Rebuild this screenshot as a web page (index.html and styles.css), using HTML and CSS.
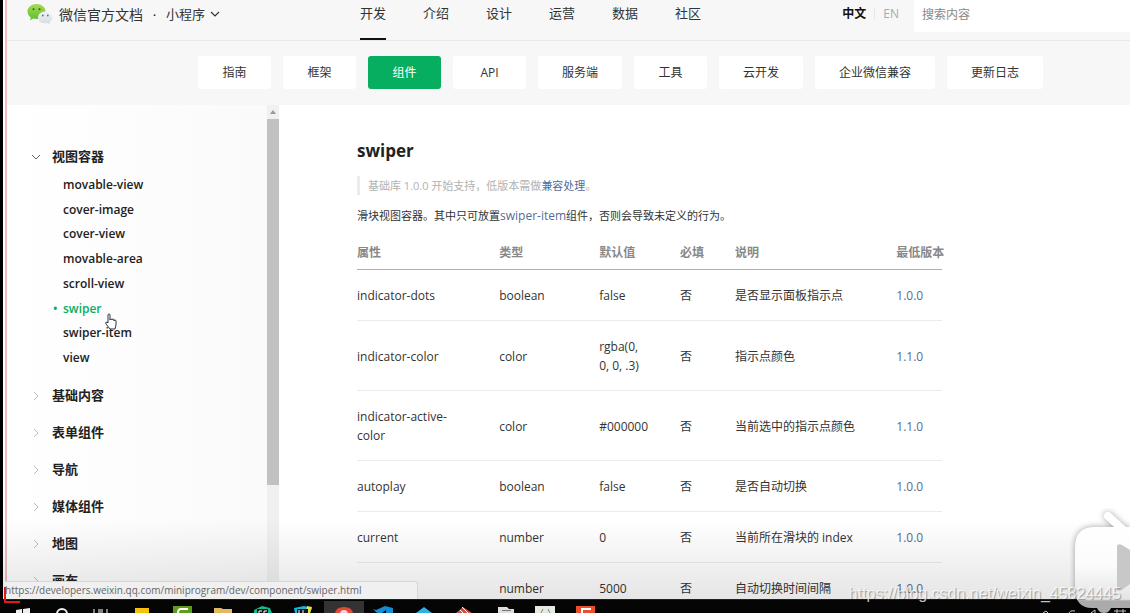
FILE: index.html
```html
<!DOCTYPE html>
<html lang="zh-CN">
<head>
<meta charset="utf-8">
<title>swiper | 微信官方文档</title>
<link rel="stylesheet" href="styles.css">
</head>
<body>
<div class="screen">
  <div class="browser">
    <header class="topbar">
      <a class="brand" href="#">
        <svg class="logo" viewBox="0 0 26 22" width="26" height="22" aria-hidden="true">
          <defs>
            <linearGradient id="g" x1="0" y1="0" x2="0" y2="1"><stop offset="0" stop-color="#a5da52"/><stop offset="1" stop-color="#5fbd35"/></linearGradient>
            <linearGradient id="w" x1="0" y1="0" x2="0" y2="1"><stop offset="0" stop-color="#f0f2f5"/><stop offset="1" stop-color="#d6dae1"/></linearGradient>
          </defs>
          <path fill="url(#g)" d="M9.500 1C4.500 1 .5 4.300.5 8.500c0 2.400 1.300 4.500 3.300 5.900L3 17.300l3.200-1.700c1 .3 2.200.4 3.300.4 5 0 9-3.300 9-7.500S14.500 1 9.500 1z"/>
          <circle cx="6.500" cy="6.200" r="1" fill="#32611e"/><circle cx="12.500" cy="6.200" r="1" fill="#32611e"/>
          <path fill="url(#w)" d="M18.200 8.500c-4 0-7.200 2.600-7.200 5.900s3.200 5.900 7.200 5.900c.8 0 1.600-.1 2.300-.3l2.600 1.300-.6-2.300c1.700-1.100 2.800-2.700 2.800-4.600 0-3.300-3.100-5.900-7.100-5.900z"/>
          <circle cx="15.800" cy="12.500" r=".9" fill="#66717f"/><circle cx="20.800" cy="12.500" r=".9" fill="#66717f"/>
        </svg>
        <span>微信官方文档</span>
      </a>
      <span class="dot">•</span>
      <button class="product" type="button">小程序
        <svg viewBox="0 0 10 6" width="10" height="6" aria-hidden="true"><path d="M1 1l4 4 4-4" fill="none" stroke="#333" stroke-width="1.200"/></svg>
      </button>
      <nav class="nav" aria-label="主导航">
        <a class="on" href="#">开发</a><a href="#">介绍</a><a href="#">设计</a><a href="#">运营</a><a href="#">数据</a><a href="#">社区</a>
      </nav>
      <div class="lang"><a class="cur" href="#">中文</a><a href="#">EN</a></div>
      <input class="search" type="search" placeholder="搜索内容" aria-label="搜索内容">
    </header>
    <nav class="tabs" aria-label="文档分类">
      <a href="#">指南</a><a href="#">框架</a><a class="on" href="#">组件</a><a href="#">API</a><a href="#">服务端</a><a href="#">工具</a><a href="#">云开发</a><a href="#">企业微信兼容</a><a href="#">更新日志</a>
    </nav>
    <div class="body">
      <aside class="side">
        <ul class="groups">
          <li><button class="group open" type="button"><svg viewBox="0 0 10 10" width="10" height="10" aria-hidden="true"><path d="M1 3l4 4 4-4"/></svg>视图容器</button>
            <ul class="items">
              <li><a href="#">movable-view</a></li>
              <li><a href="#">cover-image</a></li>
              <li><a href="#">cover-view</a></li>
              <li><a href="#">movable-area</a></li>
              <li><a href="#">scroll-view</a></li>
              <li><a class="on" href="#">swiper</a></li>
              <li><a href="#">swiper-item</a></li>
              <li><a href="#">view</a></li>
            </ul>
          </li>
          <li><button class="group" type="button"><svg viewBox="0 0 10 10" width="10" height="10" aria-hidden="true"><path d="M3 1l4 4-4 4"/></svg>基础内容</button></li>
          <li><button class="group" type="button"><svg viewBox="0 0 10 10" width="10" height="10" aria-hidden="true"><path d="M3 1l4 4-4 4"/></svg>表单组件</button></li>
          <li><button class="group" type="button"><svg viewBox="0 0 10 10" width="10" height="10" aria-hidden="true"><path d="M3 1l4 4-4 4"/></svg>导航</button></li>
          <li><button class="group" type="button"><svg viewBox="0 0 10 10" width="10" height="10" aria-hidden="true"><path d="M3 1l4 4-4 4"/></svg>媒体组件</button></li>
          <li><button class="group" type="button"><svg viewBox="0 0 10 10" width="10" height="10" aria-hidden="true"><path d="M3 1l4 4-4 4"/></svg>地图</button></li>
          <li><button class="group" type="button"><svg viewBox="0 0 10 10" width="10" height="10" aria-hidden="true"><path d="M3 1l4 4-4 4"/></svg>画布</button></li>
        </ul>
      </aside>
      <div class="scroll" aria-hidden="true">
        <svg viewBox="0 0 12 14" width="12" height="14"><path d="M3 9l3-4 3 4z" fill="#999"/></svg>
        <div class="thumb"></div>
      </div>
      <main class="doc">
        <h1>swiper</h1>
        <blockquote>基础库 1.0.0 开始支持，低版本需做<a href="#">兼容处理</a>。</blockquote>
        <p>滑块视图容器。其中只可放置<a class="comp" href="#">swiper-item</a>组件，否则会导致未定义的行为。</p>
        <table>
          <colgroup><col class="c1"><col class="c2"><col class="c3"><col class="c4"><col class="c5"><col class="c6"></colgroup>
          <thead><tr><th>属性</th><th>类型</th><th>默认值</th><th>必填</th><th>说明</th><th>最低版本</th></tr></thead>
          <tbody>
            <tr><td>indicator-dots</td><td>boolean</td><td>false</td><td>否</td><td>是否显示面板指示点</td><td><a href="#">1.0.0</a></td></tr>
            <tr><td>indicator-color</td><td>color</td><td>rgba(0,<br>0, 0, .3)</td><td>否</td><td>指示点颜色</td><td><a href="#">1.1.0</a></td></tr>
            <tr><td>indicator-active-<br>color</td><td>color</td><td>#000000</td><td>否</td><td>当前选中的指示点颜色</td><td><a href="#">1.1.0</a></td></tr>
            <tr><td>autoplay</td><td>boolean</td><td>false</td><td>否</td><td>是否自动切换</td><td><a href="#">1.0.0</a></td></tr>
            <tr><td>current</td><td>number</td><td>0</td><td>否</td><td>当前所在滑块的 index</td><td><a href="#">1.0.0</a></td></tr>
            <tr><td></td><td>number</td><td>5000</td><td>否</td><td>自动切换时间间隔</td><td><a href="#">1.0.0</a></td></tr>
          </tbody>
        </table>
      </main>
    </div>
    <div class="shade"></div>
    <div class="status">https://developers.weixin.qq.com/miniprogram/dev/component/swiper.html</div>
  </div>
  <footer class="taskbar">
    <svg viewBox="0 0 620 12" width="620" height="12" aria-hidden="true">
      <path fill="#eee" d="M16 9l6-1v4h-6zM23 8l7-1v5h-7z"/>
      <path d="M57 13a5 5 0 0 1 10 0" fill="none" stroke="#eee" stroke-width="2"/>
      <path d="M94 8v4M98 9h5M98 11h5M107 8v4" stroke="#aaa" stroke-width="1.500"/>
      <path fill="#f4c20d" d="M135 7h14v5h-14z"/>
      <path fill="#5b9e1b" d="M173 5h19v7h-19z"/><path d="M188 8h-7q-3 0-3 4" fill="none" stroke="#fff" stroke-width="2"/>
      <path fill="#e2b865" d="M214 7h7l2 1h9v4h-18z"/>
      <path fill="#18b78b" d="M254 9l8-4 8 2 2 5h-18z"/><path fill="#111" d="M257 8h11v4h-11z"/><path d="M259 12v-2h3M264 12v-2h3" stroke="#fff" fill="none"/>
      <path fill="#14b5df" d="M294 7l10-2 8 2-2 5h-15z"/><path fill="#e5df46" d="M307 5l5 1-2 6h-4z"/><path fill="#111" d="M297 8h11v4h-11z"/><path d="M299 12V9M303 12V9" stroke="#fff"/>
      <path fill="#333" d="M324 0h40v12h-40z"/><path fill="#df493c" d="M335 12q1-6 9-6t9 6z"/><circle cx="344" cy="13" r="4" fill="#f4d5cc"/>
      <path fill="#168bd1" d="M373 8l3 1 9-4 8 2v5h-7v-3l-4 3h-5z"/>
      <path fill="#31afe9" d="M416 12l8-6 8 6z"/>
      <path fill="#ce5148" d="M456 12l7-6 9 6z"/><path d="M462 6l6 6M460 9l3 3" stroke="#fff"/>
      <path fill="#ddd" d="M498 6h9l2 2h5v4h-16z"/><path fill="#777" d="M502 9h9v1h-9z"/>
      <path fill="#e6e8e5" d="M535 5h20v7h-20z"/><path d="M543 8l-2 4M548 8l2 4" stroke="#6a9b53"/>
      <path fill="#e94f2c" d="M576 5h19v7h-19z"/><path d="M591 8h-9v4" stroke="#fff" stroke-width="2" fill="none"/>
    </svg>
    <svg viewBox="0 0 90 12" width="90" height="12" aria-hidden="true"><path d="M3 12l3-2 2 2M29 13q0-4 6-3M51 12l4-3v3M74 10h12M77 8v4M83 8v4" stroke="#ccc" fill="none"/></svg>
  </footer>
  <div class="corner"></div>
  <svg class="cursor" viewBox="0 0 14 17" width="14" height="17" aria-hidden="true"><path d="M4 10V2q0-1 1-1t1 1v5q0-1 1-1t1 1q0-1 1-1t1 1v1q0-1 1-1t1 1v4l-1 4H6l-4-5q-1-2 1-2z" fill="#fff" stroke="#334" stroke-width="1"/></svg>
  <svg class="player" viewBox="0 0 60 105" width="60" height="105" aria-hidden="true">
    <defs><linearGradient id="p" x1="0" y1="0" x2="0" y2="1"><stop offset="0" stop-color="#fff"/><stop offset=".45" stop-color="#fbfbfb"/><stop offset=".84" stop-color="#e4e4e4"/><stop offset=".86" stop-color="#aaa"/><stop offset="1" stop-color="#aaa"/></linearGradient></defs>
    <g class="tv"><path d="M38 8l22 20" stroke="#fff" stroke-width="8" stroke-linecap="round"/>
    <path fill="url(#p)" d="M60 19H25Q5 19 5 39v41q0 20 17 20h5q2 5 7 5t7-5h19z"/></g>
    <path d="M47 39q0-4 5-2l8 5v34l-8 6q-5 2-5-2z" fill="#c8c8c8"/>
  </svg>
  <div class="watermark">https://blog.csdn.net/weixin_45824445</div>
</div>
</body>
</html>
```
FILE: styles.css
```css
* { box-sizing: border-box; }
body { margin: 0; font: 12px/19px "Open Sans", "Noto Sans CJK SC", sans-serif; color: #333; background: #000; }
a { color: inherit; text-decoration: none; }
button { border: 0; padding: 0; background: none; font: inherit; color: inherit; }
ul { list-style: none; margin: 0; padding: 0; }

.screen { position: relative; height: 100vh; display: flex; flex-direction: column; overflow: hidden; }
.browser { position: relative; flex: 1; min-height: 0; display: flex; flex-direction: column; margin-left: 3px; padding-left: 4px; background: linear-gradient(90deg, #fff 2px, #edbfbf 2px, #edbfbf 4px, #fff 4px); border-bottom: 1px solid #4a100c; overflow: hidden; }

.topbar { flex: none; display: flex; align-items: center; height: 41px; padding-bottom: 12px; padding-left: 20px; background: #f7f7f7; border-bottom: 1px solid #e9e9e9; font-size: 13px; }
.brand { display: flex; align-items: center; gap: 6px; font-size: 14px; }
.dot { width: 23px; text-align: center; font-size: 8px; }
.product { display: flex; align-items: center; gap: 5px; }
.nav { display: flex; gap: 37px; margin-left: 140px; }
.nav a { height: 40px; margin: 11px 0 -1px; padding-top: 4px; border-bottom: 2px solid transparent; }
.nav .on { border-color: #111; }
.lang { display: flex; margin-left: auto; margin-right: 15px; font-size: 12px; line-height: 12px; color: #aaa; }
.lang .cur { color: #111; font-weight: 700; padding-right: 8px; margin-right: 8px; border-right: 1px solid #e6e6e6; }
.search { width: 216px; height: 35px; margin-top: 1px; padding: 0 8px; border: 0; border-radius: 3px; background: #fff; font: inherit; font-size: 12px; outline: 0; }
.search::placeholder { color: #888; opacity: 1; }

.tabs { flex: none; display: flex; gap: 12px; padding: 15px 0 16px 191px; background: #f7f7f7; }
.tabs a { min-width: 73px; height: 33px; padding: 0 24px; line-height: 33px; border-radius: 3px; background: #fff; text-align: center; white-space: nowrap; }
.tabs .on { background: #07ae5f; color: #fff; }

.body { flex: 1; min-height: 0; display: flex; overflow: hidden; }
.side { width: 260px; padding: 36px 0 0 24px; background: linear-gradient(90deg, #fff, #fafafa); font-weight: 600; color: #222; }
.group { display: flex; align-items: center; gap: 11px; height: 37px; font-size: 13px; font-weight: 700; }
.group svg { fill: none; stroke: #bbb; }
.group.open { height: 31px; }
.group.open svg { stroke: #666; }
.items { display: grid; grid-auto-rows: 1fr; align-items: center; height: 198px; margin-bottom: 7px; padding-left: 32px; }
.items .on { display: flex; color: #07ae5f; }
.items .on::before { content: "•"; width: 10px; margin-left: -10px; }
.scroll { width: 12px; background: #f0f0f0; }
.scroll svg { display: block; }
.thumb { height: 74%; background: #c1c1c1; }

.doc { flex: 1; padding: 32px 188px 0 78px; }
h1 { margin: 0 0 12px; font-size: 17px; line-height: 27px; font-weight: 700; color: #222; }
blockquote { margin: 0 0 11px; padding-left: 8px; border-left: 3px solid #ebebeb; font-size: 11px; color: #b2b2b2; }
.doc a { color: #576b95; }
.doc p { margin: 0 0 18px; font-size: 11px; }
.doc .comp { font-size: 12px; }
table { width: 100%; table-layout: fixed; border-collapse: separate; border-spacing: 0; }
.c1 { width: 24.3%; } .c2 { width: 17.1%; } .c3 { width: 13.8%; } .c4 { width: 9.4%; } .c5 { width: 27.6%; } .c6 { width: 7.8%; }
th { padding: 0 0 7px; text-align: left; font-weight: 600; color: #888; border-bottom: 1px solid #b0b0b0; white-space: nowrap; }
td { padding: 16px 0 15px; border-bottom: 1px solid #ebebeb; white-space: nowrap; }

.shade { position: absolute; left: 0; right: 0; bottom: 0; height: 80px; background: linear-gradient(rgba(0, 0, 0, 0), rgba(0, 0, 0, .1)); }
.status { position: absolute; left: 2px; bottom: 0; width: 413px; height: 18px; border: 1px solid #d6d6d6; border-left: 0; border-bottom: 0; border-radius: 0 3px 0 0; background: #f0f0f0; font-size: 10px; line-height: 17px; color: #666; white-space: nowrap; }
.taskbar { flex: none; height: 13px; display: flex; justify-content: space-between; padding-top: 1px; background: #050505; }
.corner { position: absolute; left: 4px; bottom: 10px; width: 16px; height: 16px; border: solid #e21b12; border-width: 0 0 2px 2px; }
.cursor { position: absolute; left: 104px; top: 313px; }
.player { position: absolute; right: 0; bottom: 0; }
.tv { filter: drop-shadow(0 0 3px rgba(0, 0, 0, .35)); }
.watermark { position: absolute; right: 9px; bottom: 9px; font: 16px/20px "Liberation Sans", sans-serif; color: rgba(255, 255, 255, .75); text-shadow: 1px 1px 1px rgba(0, 0, 0, .35); }
```
